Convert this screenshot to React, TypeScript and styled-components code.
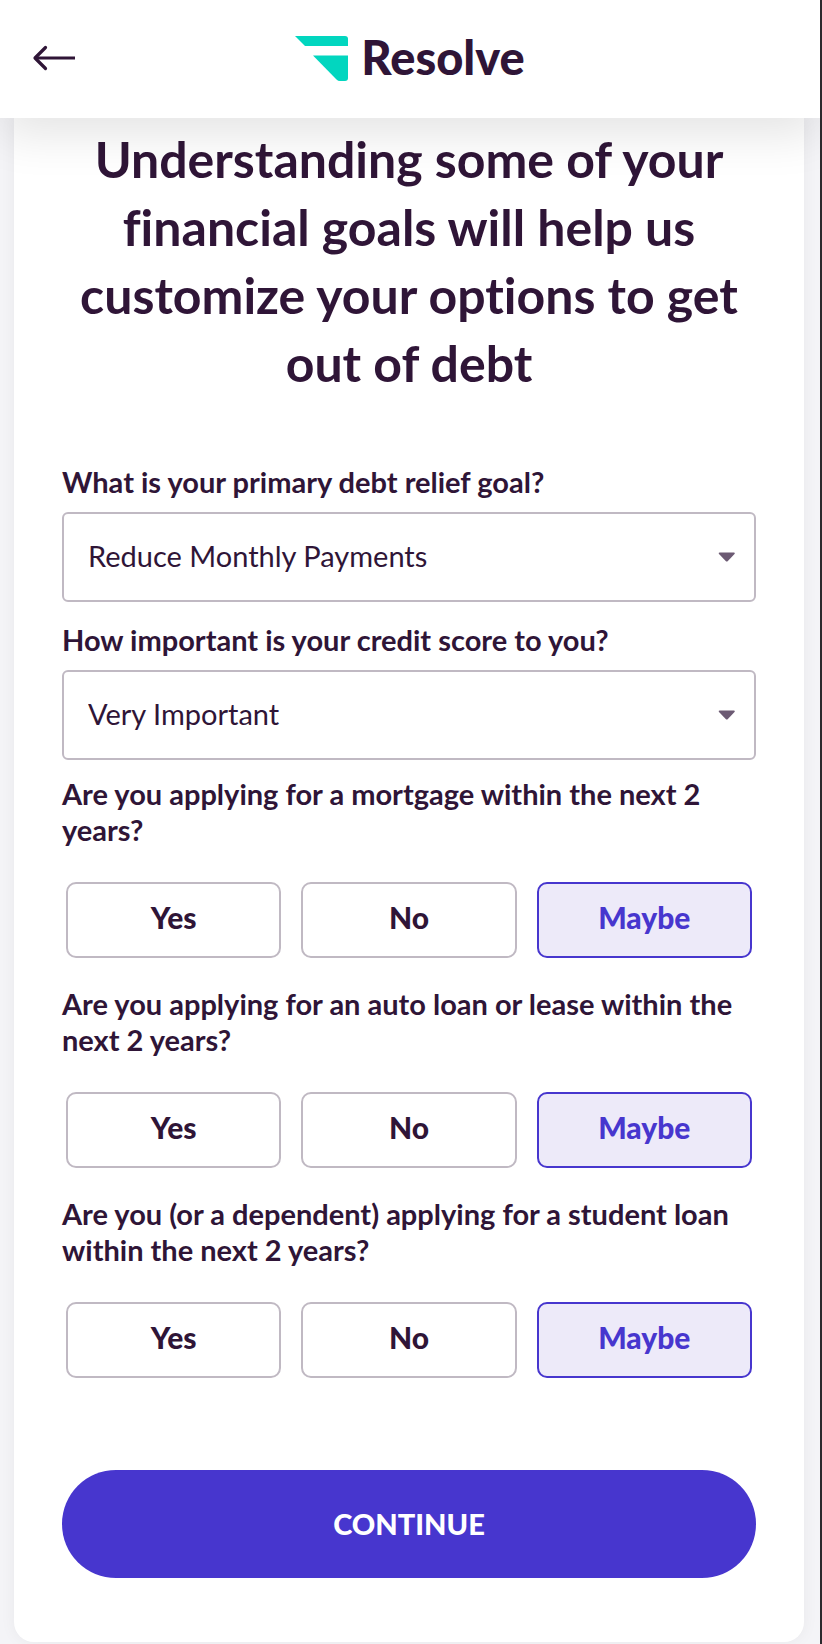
import React, { useState } from "react";
import styled, { createGlobalStyle } from "styled-components";

const ink = "#2f1537";
const accent = "#4736ce";
const outline = "#c0b9c3";

const GlobalStyle = createGlobalStyle`
  *, *::before, *::after { box-sizing: border-box; }
  body {
    margin: 0;
    background: #f4f4f7;
    color: ${ink};
    font-family: Lato, "Open Sans", sans-serif;
    font-variant-ligatures: none;
  }
  button, select { font: inherit; color: inherit; }
`;

const Page = styled.div`
  min-height: 100vh;
  border-right: 2px solid #2b2a2d;
  overflow: hidden;
`;

const Header = styled.header`
  position: relative;
  z-index: 1;
  display: grid;
  grid-template-columns: 1fr auto 1fr;
  align-items: center;
  height: 118px;
  padding: 0 32px 2px;
  background: #fff;
  box-shadow: 0 16px 48px rgba(0, 0, 0, 0.11);
`;

const BackButton = styled.button`
  justify-self: start;
  display: flex;
  padding: 0;
  border: 0;
  background: none;
  cursor: pointer;
`;

const Brand = styled.a`
  display: flex;
  align-items: center;
  gap: 12px;
  color: inherit;
  text-decoration: none;
`;

const Wordmark = styled.span`
  padding-bottom: 2px;
  font-size: 47px;
  line-height: 56px;
  font-weight: 900;
`;

const Card = styled.main`
  margin: 0 16px 2px 14px;
  padding: 7px 48px 64px;
  background: #fff;
  border-radius: 0 0 20px 20px;
  box-shadow: 0 0 16px rgba(0, 0, 0, 0.05);
`;

const Title = styled.h1`
  margin: 0 0 67px;
  font-size: 50px;
  line-height: 68px;
  font-weight: 700;
  text-align: center;
`;

const Fields = styled.div`
  display: grid;
  gap: 20px;
  margin-bottom: 16px;
`;

const FieldLabel = styled.label`
  display: block;
  margin-bottom: 12px;
  font-size: 29px;
  line-height: 36px;
  font-weight: 700;
`;

const SelectBox = styled.div`
  display: grid;
  align-items: center;

  > * { grid-area: 1 / 1; }
  > svg {
    justify-self: end;
    margin-right: 20px;
    pointer-events: none;
  }
`;

const Select = styled.select`
  width: 100%;
  height: 90px;
  padding: 0 60px 4px 24px;
  border: 2px solid ${outline};
  border-radius: 6px;
  background: #fff;
  font-size: 29px;
  appearance: none;
`;

const Question = styled.section`
  margin-bottom: 28px;
`;

const QuestionText = styled.h2`
  margin: 0 0 34px;
  font-size: 29px;
  line-height: 36px;
  font-weight: 700;
`;

const Choices = styled.div`
  display: grid;
  grid-template-columns: repeat(3, 1fr);
  gap: 20px;
  padding: 0 4px;
`;

const Choice = styled.button<{ $selected: boolean }>`
  height: 76px;
  padding: 0 0 6px;
  border: 2px solid ${(p) => (p.$selected ? accent : outline)};
  border-radius: 10px;
  background: ${(p) => (p.$selected ? "#edeaf9" : "#fff")};
  color: ${(p) => (p.$selected ? accent : ink)};
  font-size: 30px;
  font-weight: 900;
  cursor: pointer;
`;

const ContinueButton = styled.button`
  width: 100%;
  height: 108px;
  margin-top: 64px;
  padding: 0 0 2px;
  border: 0;
  border-radius: 54px;
  background: ${accent};
  color: #fff;
  font-size: 29px;
  font-weight: 900;
  cursor: pointer;
`;

const answers = ["Yes", "No", "Maybe"];

const questions = [
  "Are you applying for a mortgage within the next 2 years?",
  "Are you applying for an auto loan or lease within the next 2 years?",
  "Are you (or a dependent) applying for a student loan within the next 2 years?",
];

function SelectField({ id, label, options }: { id: string; label: string; options: string[] }) {
  return (
    <div>
      <FieldLabel htmlFor={id}>{label}</FieldLabel>
      <SelectBox>
        <Select id={id} defaultValue={options[0]}>
          {options.map((o) => (
            <option key={o}>{o}</option>
          ))}
        </Select>
        <svg width="18" height="10" viewBox="0 0 18 10" aria-hidden="true">
          <path d="M1.500 .5h14.500q1.500 .3.500 1.600L9.900 8.900q-1.100 1-2.200 0L1 2.100Q0 .8 1.500 .5z" fill="#6c5a73" />
        </svg>
      </SelectBox>
    </div>
  );
}

function ChoiceQuestion({ id, text }: { id: string; text: string }) {
  const [value, setValue] = useState("Maybe");
  return (
    <Question aria-labelledby={id}>
      <QuestionText id={id}>{text}</QuestionText>
      <Choices role="group" aria-labelledby={id}>
        {answers.map((a) => (
          <Choice
            key={a}
            type="button"
            $selected={a === value}
            aria-pressed={a === value}
            onClick={() => setValue(a)}
          >
            {a}
          </Choice>
        ))}
      </Choices>
    </Question>
  );
}

export default function App() {
  return (
    <Page>
      <GlobalStyle />
      <Header>
        <BackButton type="button" aria-label="Back">
          <svg width="44" height="28" viewBox="0 0 44 28" fill="none" stroke={ink} strokeWidth="3.2" strokeLinecap="round" strokeLinejoin="round">
            <path d="M13.500 3.500 3 14l10.500 10.500" />
            <path d="M3 14H43" strokeLinecap="butt" />
          </svg>
        </BackButton>
        <Brand href="#">
          <svg width="54" height="46" viewBox="0 0 54 46" fill="#02d6bf" aria-hidden="true">
            <path d="M0 1h50q3 0 3 3v7H10z" />
            <path d="M18 20.500h35V43q0 3-3 3h-5q-2 0-3.500-1.500z" />
          </svg>
          <Wordmark>Resolve</Wordmark>
        </Brand>
      </Header>
      <Card>
        <Title>Understanding some of your financial goals will help us customize your options to get out of debt</Title>
        <Fields>
          <SelectField
            id="goal"
            label="What is your primary debt relief goal?"
            options={["Reduce Monthly Payments", "Lower Interest Rates", "Become Debt Free"]}
          />
          <SelectField
            id="credit"
            label="How important is your credit score to you?"
            options={["Very Important", "Somewhat Important", "Not Important"]}
          />
        </Fields>
        {questions.map((q, i) => (
          <ChoiceQuestion key={q} id={`question-${i}`} text={q} />
        ))}
        <ContinueButton type="button">CONTINUE</ContinueButton>
      </Card>
    </Page>
  );
}
